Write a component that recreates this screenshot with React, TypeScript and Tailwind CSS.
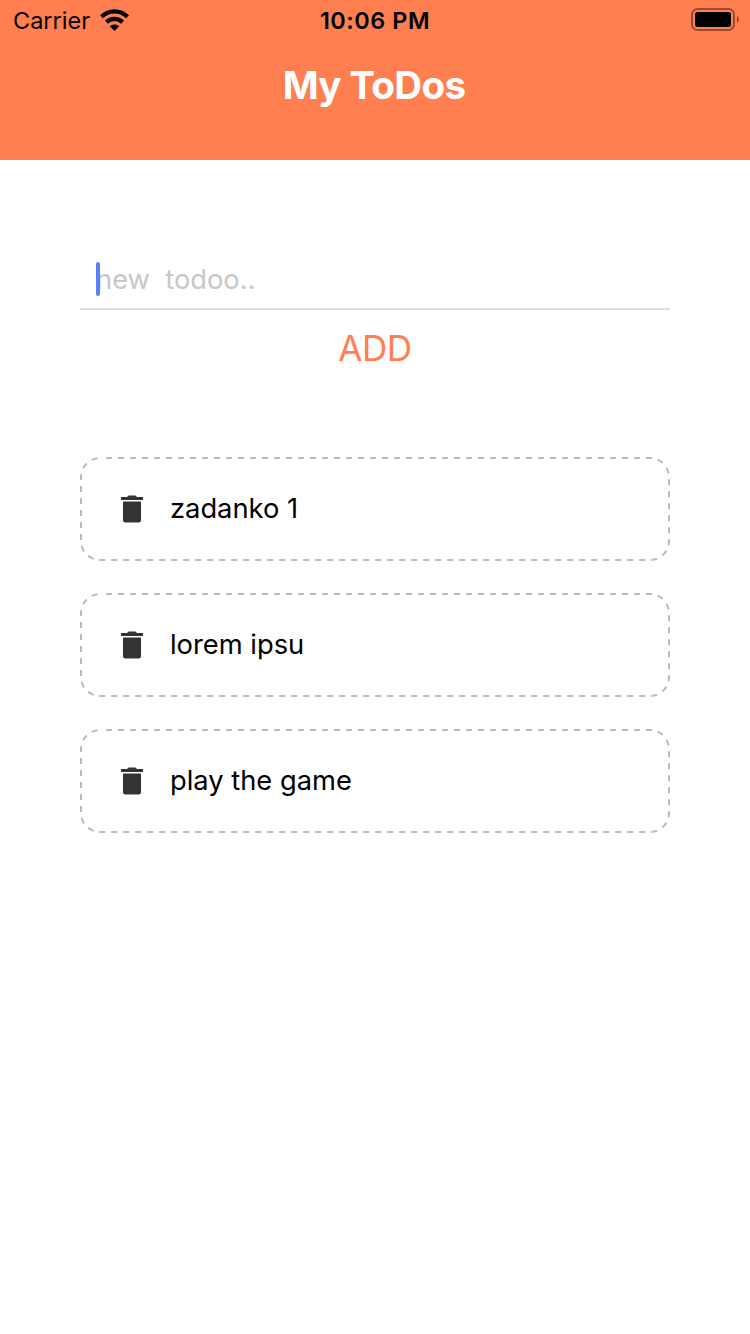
const todos = ["zadanko 1", "lorem ipsu", "play the game"];

function WifiIcon() {
  return (
    <svg width="30" height="22" viewBox="0 0 30 22" fill="none" stroke="#000" strokeWidth="4.3">
      <path d="M1.5 7.8C8.8.6 20.2.6 27.5 7.8" />
      <path d="M6.4 13.1c4.5-4.3 11.7-4.3 16.2 0" />
      <path d="M14.5 22l-4.7-4.7c2.8-2.5 6.6-2.5 9.4 0z" fill="#000" stroke="none" />
    </svg>
  );
}

function BatteryIcon() {
  return (
    <svg width="50" height="24" viewBox="0 0 50 24" fill="none">
      <rect x="2" y="1" width="42" height="21" rx="5.5" stroke="#000" strokeOpacity=".4" strokeWidth="2" />
      <rect x="5" y="4" width="36" height="15" rx="2.5" fill="#000" />
      <path d="M47 8c2.4 1 2.4 6 0 7z" fill="#000" fillOpacity=".45" />
    </svg>
  );
}

function TrashIcon() {
  return (
    <svg width="22" height="28" viewBox="0 0 22 28" fill="#333">
      <path d="M0 2h6L7.5.5h7L16 2h6v3H0z" />
      <path d="M2 6.5h18V25a2.5 2.5 0 0 1-2.5 2.5h-13A2.5 2.5 0 0 1 2 25z" />
    </svg>
  );
}

function TodoItem({ text }: { text: string }) {
  return (
    <li className="relative flex h-26 items-center pl-[41px]">
      <svg className="absolute inset-0" width="590" height="104" fill="none">
        <rect x="1" y="1" width="588" height="102" rx="19" stroke="#bbb" strokeWidth="2" strokeDasharray="6 6" strokeDashoffset="6" />
      </svg>
      <TrashIcon />
      <span className="-mt-px ml-[27px] text-[27.3px] leading-9 whitespace-pre">{text}</span>
    </li>
  );
}

export default function App() {
  return (
    <div className="flex h-[1334px] w-[750px] flex-col bg-white font-['Inter',sans-serif] text-black">
      <header className="h-40 bg-[#ff7f50]">
        <div className="grid h-10 grid-cols-3 items-center">
          <div className="flex items-center gap-[10px] pl-[13px]">
            <span className="mt-0.5 text-[23.5px] leading-7">Carrier</span>
            <WifiIcon />
          </div>
          <span className="mt-0.5 text-center text-[23.4px] leading-7 font-semibold tracking-[0.55px]">10:06 PM</span>
          <div className="flex justify-end pr-[10px]">
            <BatteryIcon />
          </div>
        </div>
        <h1 className="pt-[21px] pr-0.5 text-center text-[38.6px] leading-12 font-bold tracking-[-0.7px] text-white">My ToDos</h1>
      </header>
      <main className="flex flex-col px-20 pt-20">
        <div className="flex h-[70px] items-center border-b-2 border-[#ddd] pt-[10px] pl-4">
          <span className="relative z-10 -mt-px -mr-1 h-[34px] w-1 rounded-full bg-[#5a80f5]" />
          <span className="mt-0.5 text-[27.3px] leading-9 whitespace-pre text-[#c7c7c7]">new  todoo..</span>
        </div>
        <button className="mt-4 self-center text-[35px] leading-11 tracking-[-0.4px] text-[#ff7f50]">ADD</button>
        <ul className="mt-[87px] flex flex-col gap-8">
          {todos.map((todo) => (
            <TodoItem key={todo} text={todo} />
          ))}
        </ul>
      </main>
    </div>
  );
}
